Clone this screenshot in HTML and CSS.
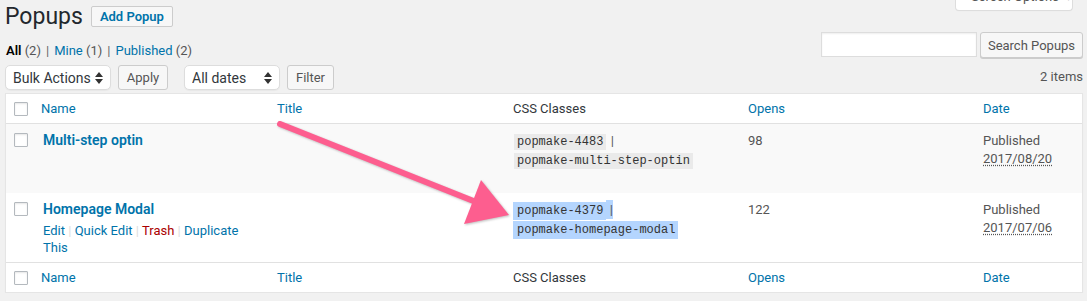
FILE: index.html
```html
<!DOCTYPE html>
<html lang="en">
  <head>
    <meta charset="UTF-8" />
    <meta name="viewport" content="width=device-width, initial-scale=1.0" />
    <title>Popups</title>
    <link rel="stylesheet" href="styles.css">
  </head>
  <body>
    <div class="wrap">
      <div class="head">
        <h1 class="page-title">Popups</h1>
        <a class="title-action" href="#">Add Popup</a>
        <div class="screen-options">Screen Options <span class="caret">&#9662;</span></div>
      </div>

      <div class="views">
        <ul class="subsubsub">
          <li class="current">All <span class="count">(2)</span></li>
          <li class="sep">|</li>
          <li><a href="#">Mine <span class="count">(1)</span></a></li>
          <li class="sep">|</li>
          <li><a href="#">Published <span class="count">(2)</span></a></li>
        </ul>
        <div class="search-box">
          <input type="search" />
          <button class="button">Search Popups</button>
        </div>
      </div>

      <div class="tablenav">
        <div class="actions">
          <label class="select bulk">
            <select><option>Bulk Actions</option></select>
            <svg width="8" height="12" viewBox="0 0 8 12"><path d="M4 0L8 5H0z M4 12L0 7h8z" fill="#333"/></svg>
          </label>
          <button class="button apply">Apply</button>
        </div>
        <div class="actions">
          <label class="select dates">
            <select><option>All dates</option></select>
            <svg width="8" height="12" viewBox="0 0 8 12"><path d="M4 0L8 5H0z M4 12L0 7h8z" fill="#333"/></svg>
          </label>
          <button class="button filter">Filter</button>
        </div>
        <div class="displaying">2 items</div>
      </div>

      <table class="list">
        <colgroup>
          <col class="c-check" />
          <col class="c-name" />
          <col class="c-title" />
          <col class="c-css" />
          <col class="c-opens" />
          <col />
        </colgroup>
        <thead>
          <tr>
            <td class="check"><span class="cb"></span></td>
            <th><a href="#">Name</a></th>
            <th><a href="#">Title</a></th>
            <th>CSS Classes</th>
            <th><a href="#">Opens</a></th>
            <th><a href="#">Date</a></th>
          </tr>
        </thead>
        <tbody>
          <tr class="alt">
            <td class="check"><span class="cb"></span></td>
            <td class="name">
              <a class="row-title" href="#">Multi-step optin</a>
              <div class="row-actions hidden">
                <a href="#">Edit</a> <span class="bar">|</span> <a href="#">Quick Edit</a> <span class="bar">|</span> <a class="trash" href="#">Trash</a> <span class="bar">|</span> <a href="#">Duplicate This</a>
              </div>
            </td>
            <td></td>
            <td class="css"><code>popmake-4483</code> | <code>popmake-multi-step-optin</code></td>
            <td>98</td>
            <td>Published<br><abbr>2017/08/20</abbr></td>
          </tr>
          <tr>
            <td class="check"><span class="cb"></span></td>
            <td class="name">
              <a class="row-title" href="#">Homepage Modal</a>
              <div class="row-actions">
                <a href="#">Edit</a> <span class="bar">|</span> <a href="#">Quick Edit</a> <span class="bar">|</span> <a class="trash" href="#">Trash</a> <span class="bar">|</span> <a href="#">Duplicate This</a>
              </div>
            </td>
            <td></td>
            <td class="css selected"><code>popmake-4379</code><span class="pipe"> |</span> <code>popmake-homepage-modal</code></td>
            <td>122</td>
            <td>Published<br><abbr>2017/07/06</abbr></td>
          </tr>
        </tbody>
        <tfoot>
          <tr>
            <td class="check"><span class="cb"></span></td>
            <th><a href="#">Name</a></th>
            <th><a href="#">Title</a></th>
            <th>CSS Classes</th>
            <th><a href="#">Opens</a></th>
            <th><a href="#">Date</a></th>
          </tr>
        </tfoot>
      </table>
    </div>

    <!-- annotation arrow drawn over the screenshot -->
    <svg class="arrow" width="1087" height="301" viewBox="0 0 1087 301">
      <line x1="280" y1="124" x2="476" y2="202" stroke="#fd5e8f" stroke-width="6" stroke-linecap="round" />
      <polygon points="481,180 509,215 464,224" fill="#fd5e8f" />
    </svg>
  </body>
</html>
```

FILE: styles.css
```css
body {
  margin: 0;
  position: relative;
  background: #f1f1f1;
  color: #444;
  font-family: Roboto, "Liberation Sans", Arial, sans-serif;
  font-size: 13px;
  line-height: 1.4;
}

a {
  color: #0073aa;
  text-decoration: none;
}

.wrap {
  margin: 0 4px 0 5px;
}

/* heading */
.head {
  display: flex;
  align-items: flex-start;
}

.page-title {
  margin: 0;
  padding-top: 2px;
  font-size: 23px;
  font-weight: 400;
  line-height: 29px;
  color: #23282d;
}

.title-action {
  margin: 6px 0 0 8px;
  padding: 3px 8px;
  line-height: 13px;
  font-weight: 600;
  border: 1px solid #ccc;
  border-radius: 2px;
  background: #f7f7f7;
}

.screen-options {
  margin: -13px 10px 0 auto;
  width: 118px;
  box-sizing: border-box;
  height: 24px;
  padding: 1px 0 0 15px;
  line-height: 18px;
  color: #555;
  background: #fff;
  border: 1px solid #ddd;
  border-top: none;
  border-radius: 0 0 4px 4px;
  box-shadow: 0 1px 1px -1px rgba(0, 0, 0, 0.1);
  white-space: nowrap;
}

.screen-options .caret {
  color: #bbb;
  font-size: 10px;
  margin-left: 4px;
}

/* views + search */
.views {
  display: flex;
  justify-content: space-between;
  align-items: flex-start;
  margin-top: 1px;
}

.subsubsub {
  display: flex;
  gap: 5px;
  list-style: none;
  margin: 9px 0 0 1px;
  padding: 0;
  line-height: 20px;
  color: #666;
}

.subsubsub .current {
  color: #000;
  font-weight: 600;
}

.subsubsub .count {
  color: #555;
  font-weight: 400;
}

.subsubsub .sep {
  color: #666;
}

.search-box {
  display: flex;
  gap: 3px;
}

.search-box input {
  width: 156px;
  height: 25px;
  box-sizing: border-box;
  margin: 0;
  border: 1px solid #ddd;
  background: #fff;
  box-shadow: inset 0 1px 2px rgba(0, 0, 0, 0.07);
}

.button {
  height: 26px;
  margin: 0;
  padding: 0 6px;
  font-family: inherit;
  font-size: 13px;
  color: #555;
  background: #f7f7f7;
  border: 1px solid #ccc;
  border-radius: 3px;
  box-shadow: 0 1px 0 #ccc;
  white-space: nowrap;
}

.search-box .button {
  width: 103px;
}

/* tablenav */
.tablenav {
  display: flex;
  align-items: center;
  gap: 16px;
  margin: 4px 0 3px;
  height: 25px;
}

.actions {
  display: flex;
  gap: 7px;
}

.select {
  position: relative;
  display: block;
}

.select select {
  appearance: none;
  -webkit-appearance: none;
  height: 25px;
  margin: 0;
  padding: 0 0 0 7px;
  font-family: inherit;
  font-size: 14px;
  color: #32373c;
  background: #fff;
  border: 1px solid #ddd;
  border-radius: 5px;
  box-shadow: 0 1px 1px rgba(0, 0, 0, 0.04);
}

.select svg {
  position: absolute;
  right: 8px;
  top: 7px;
}

.bulk select {
  width: 106px;
}

.dates select {
  width: 96px;
}

.tablenav .button {
  height: 25px;
  box-shadow: none;
}

.apply {
  width: 50px;
}

.filter {
  width: 47px;
}

.displaying {
  margin-left: auto;
  color: #555;
}

/* table */
.list {
  width: 100%;
  table-layout: fixed;
  border-spacing: 0;
  background: #fff;
  border: 1px solid #e5e5e5;
  box-shadow: 0 1px 1px rgba(0, 0, 0, 0.04);
}

.c-check {
  width: 25px;
}

.c-name,
.c-title {
  width: 236px;
}

.c-css,
.c-opens {
  width: 235px;
}

.list th,
.list td {
  padding: 8px 10px;
  text-align: left;
  vertical-align: top;
  line-height: 18px;
  color: #555;
}

.list th {
  font-weight: 400;
  color: #32373c;
  padding-top: 6px;
  padding-bottom: 5px;
  vertical-align: middle;
}

.list thead th,
.list thead td {
  border-bottom: 1px solid #e1e1e1;
}

.list tfoot th,
.list tfoot td {
  border-top: 1px solid #e1e1e1;
}

.list thead td.check,
.list tfoot td.check {
  vertical-align: middle;
  padding-top: 6px;
  padding-bottom: 5px;
}

.list td.check {
  padding: 9px 0 0 8px;
}

.cb {
  display: block;
  width: 14px;
  height: 14px;
  background: #fff;
  border: 1px solid #b4b9be;
  border-radius: 1px;
  box-shadow: inset 0 1px 2px rgba(0, 0, 0, 0.1);
  box-sizing: border-box;
}

tr.alt td {
  background: #f9f9f9;
}

.list td.name {
  padding: 7px 10px 6px 12px;
}

.row-title {
  display: block;
  font-size: 14px;
  font-weight: 600;
  line-height: 18px;
}

.row-actions {
  padding-top: 4px;
  line-height: 17px;
  color: #ddd;
}

.row-actions.hidden {
  visibility: hidden;
}

.row-actions .trash {
  color: #a00;
}

.css code {
  margin: 0 1px;
  padding: 1px 3px;
  font-family: "Liberation Mono", monospace;
  font-size: 12px;
  color: #333;
  background: #eaeaea;
  white-space: nowrap;
}

.css.selected code,
.css.selected .pipe {
  background: #b4d5fe;
  padding-top: 2px;
  padding-bottom: 2px;
}

.css.selected code {
  margin: 0;
  padding-left: 4px;
}

abbr {
  text-decoration: underline dotted;
  text-underline-offset: 2px;
}

.arrow {
  position: absolute;
  top: 0;
  left: 0;
  pointer-events: none;
  filter: drop-shadow(1px 1px 1px rgba(0, 0, 0, 0.25));
}
```
